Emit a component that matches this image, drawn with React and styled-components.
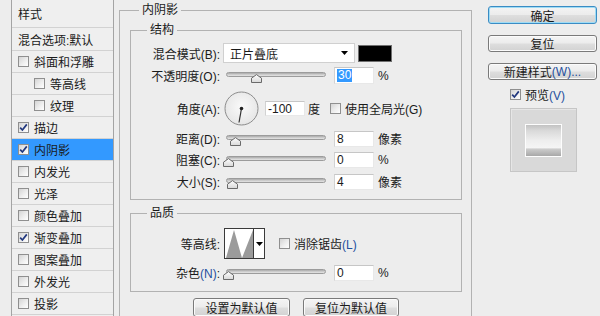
import React from 'react';
import styled, { createGlobalStyle } from 'styled-components';

const FONT = `"Liberation Sans", "Noto Sans CJK SC", sans-serif`;

const Global = createGlobalStyle`
  html, body { margin: 0; padding: 0; background: #ededed; }
  body { font-family: ${FONT}; font-size: 12px; color: #1a1a1a; }
  * { box-sizing: border-box; }
`;

const Dialog = styled.div`
  width: 600px;
  height: 316px;
  overflow: hidden;
  display: flex;
  align-items: flex-start;
  background: #ededed;
`;

/* ---------- left style list ---------- */
const StyleList = styled.div`
  margin-left: 11px;
  width: 103px;
  height: 330px;
  flex: none;
  border-left: 1px solid #a4a4a4;
  border-right: 1px solid #a4a4a4;
  background: #efefef;
`;

const ListRow = styled.div`
  height: ${(p) => p.$h || 22}px;
  display: flex;
  align-items: center;
  gap: 5px;
  padding-left: ${(p) => (p.$nested ? 22 : 6)}px;
  border-bottom: 1px solid #d2d2d2;
  background: ${(p) => (p.$selected ? '#3399ff' : 'transparent')};
  white-space: nowrap;
  font-size: 12px;
`;

/* ---------- checkbox ---------- */
const Box = styled.span`
  width: 11px;
  height: 11px;
  flex: none;
  display: inline-flex;
  align-items: center;
  justify-content: center;
  border: 1px solid #8f8f8f;
  background: linear-gradient(135deg, #d4d4d4 0%, #eeeeee 55%, #ffffff 100%);
`;

const Check = ({ checked }) => (
  <Box>
    {checked && (
      <svg width="9" height="9" viewBox="0 0 9 9">
        <path d="M1.2 4.6 L3.4 7 L7.8 1.4" fill="none" stroke="#22387e" strokeWidth="1.7" />
      </svg>
    )}
  </Box>
);

/* ---------- main panel ---------- */
const Main = styled.div`
  margin-left: 5px;
  width: 353px;
  flex: none;
`;

const Group = styled.fieldset`
  margin: ${(p) => p.$mt || 0}px 0 0 0;
  padding: 0;
  min-width: 0;
  border: 1px solid #b2b2b2;
`;

const Legend = styled.legend`
  margin-left: ${(p) => p.$ml}px;
  padding: 0 3px;
  height: 14px;
  line-height: 14px;
  font-size: 12px;
`;

const OuterBody = styled.div`
  padding: 6px 9px 12px 10px;
`;

const GroupBody = styled.div`
  display: flex;
  flex-direction: column;
  padding: ${(p) => p.$pt}px 0 ${(p) => p.$pb}px 0;
`;

const Row = styled.div`
  display: grid;
  grid-template-columns: 89px 1fr;
  column-gap: 3px;
  align-items: center;
  height: ${(p) => p.$h}px;
  margin-top: ${(p) => p.$mt || 0}px;
`;

const FieldLabel = styled.div`
  text-align: right;
  white-space: nowrap;
`;

const Key = styled.span`
  color: #1f4f9e;
`;

const Controls = styled.div`
  display: flex;
  align-items: center;
  height: 100%;
  white-space: nowrap;
`;

const Select = styled.div`
  width: 132px;
  height: 20px;
  display: flex;
  align-items: center;
  justify-content: space-between;
  padding: 0 6px 0 6px;
  background: #fff;
  border: 1px solid #d0d0d0;
`;

const Swatch = styled.div`
  width: 34px;
  height: 17px;
  margin-left: 3px;
  background: #000;
  border: 1px solid #707070;
`;

const Field = styled.div`
  width: 40px;
  height: ${(p) => p.$h || 17}px;
  margin-left: ${(p) => p.$ml || 8}px;
  display: flex;
  align-items: center;
  padding-left: 2px;
  background: #fff;
  border: 1px solid;
  border-color: #c6c6c6 #e8e8e8 #e8e8e8 #d2d2d2;
`;

const Selected = styled.span`
  background: #3399ff;
  color: #fff;
  padding: 0 1px;
  line-height: 13px;
`;

const Unit = styled.span`
  margin-left: ${(p) => p.$ml || 4}px;
`;

const SliderBox = styled.div`
  position: relative;
  width: 100px;
  height: 16px;
  margin-left: 3px;
  padding-top: 4px;
  flex: none;
`;

const Track = styled.div`
  height: 5px;
  border-radius: 3px;
  border: 1px solid #9c9c9c;
  background: linear-gradient(#a9a9a9, #d2d2d2 60%, #e4e4e4);
`;

const ThumbSvg = styled.svg`
  position: absolute;
  top: 6px;
`;

const Slider = ({ pos }) => (
  <SliderBox>
    <Track />
    <ThumbSvg width="11" height="9" viewBox="0 0 11 9" style={{ left: `${pos - 5.5}px` }}>
      <defs>
        <linearGradient id="tg" x1="0" y1="0" x2="0" y2="1">
          <stop offset="0" stopColor="#ffffff" />
          <stop offset="1" stopColor="#d8d8d8" />
        </linearGradient>
      </defs>
      <polygon points="0.5,8.5 0.5,4.2 5.5,0.6 10.5,4.2 10.5,8.5" fill="url(#tg)" stroke="#6a6a6a" strokeWidth="1" />
    </ThumbSvg>
  </SliderBox>
);

const Dial = () => (
  <svg width="35" height="35" viewBox="0 0 35 35" style={{ marginLeft: 1, flex: 'none' }}>
    <defs>
      <radialGradient id="dg" cx="0.5" cy="0.45" r="0.6">
        <stop offset="0" stopColor="#fafafa" />
        <stop offset="1" stopColor="#e4e4e4" />
      </radialGradient>
    </defs>
    <circle cx="17.5" cy="17.5" r="16.5" fill="url(#dg)" stroke="#8c8c8c" strokeWidth="1" />
    <line x1="17.5" y1="17.5" x2="15" y2="31.5" stroke="#333" strokeWidth="1.2" />
    <circle cx="17.5" cy="17.5" r="1.8" fill="#222" />
  </svg>
);

const Contour = styled.div`
  width: 41px;
  height: 31px;
  margin-left: 1px;
  display: flex;
  border: 1px solid #3a3a3a;
  background: #fff;
`;

const ContourPic = styled.div`
  width: 29px;
  border-right: 1px solid #3a3a3a;
  display: flex;
  align-items: flex-end;
`;

const ContourArrow = styled.div`
  flex: 1;
  display: flex;
  align-items: center;
  justify-content: center;
`;

const CheckLabel = styled.div`
  display: flex;
  align-items: center;
  gap: 4px;
  margin-left: ${(p) => p.$ml || 0}px;
`;

const Caret = () => (
  <svg width="7" height="4" viewBox="0 0 7 4">
    <polygon points="0,0 7,0 3.5,4" fill="#000" />
  </svg>
);

const ButtonRow = styled.div`
  display: flex;
  justify-content: center;
  gap: 13px;
  margin-top: 6px;
`;

const Btn = styled.div`
  width: ${(p) => p.$w}px;
  height: ${(p) => p.$h || 18}px;
  flex: none;
  display: flex;
  align-items: center;
  justify-content: center;
  border: 1px solid ${(p) => (p.$primary ? '#3a8cc4' : '#7a7a7a')};
  border-radius: 3px;
  background: linear-gradient(#f4f4f4 0%, #ececec 48%, #dedede 52%, #d2d2d2 100%);
  box-shadow: inset 0 0 0 1px ${(p) => (p.$primary ? '#9fdcf5' : '#fbfbfb')};
  white-space: nowrap;
  font-size: 12px;
  margin-top: ${(p) => p.$mt || 0}px;
`;

/* ---------- right column ---------- */
const Side = styled.div`
  margin-left: 1px;
  flex: 1;
  display: flex;
  flex-direction: column;
  align-items: flex-start;
  padding: 6px 0 0 15px;
`;

const Preview = styled.div`
  width: 67px;
  height: 64px;
  margin: 7px 0 0 22px;
  display: flex;
  align-items: center;
  justify-content: center;
  background: #d9d9d9;
  border: 1px solid #c6c6c6;
  box-shadow: inset 1px 1px 0 #e6e6e6;
`;

const PreviewSquare = styled.div`
  width: 37px;
  height: 33px;
  border: 1px solid #fdfdfd;
  background: linear-gradient(
    to bottom,
    #c2c2c2 0%,
    #d9d9d9 18%,
    #eeeeee 50%,
    #f5f5f5 74%,
    #cdcdcd 77%,
    #a8a8a8 100%
  );
`;

const layers = [
  { label: '斜面和浮雕' },
  { label: '等高线', nested: true },
  { label: '纹理', nested: true },
  { label: '描边', checked: true },
  { label: '内阴影', checked: true, selected: true },
  { label: '内发光' },
  { label: '光泽' },
  { label: '颜色叠加' },
  { label: '渐变叠加', checked: true },
  { label: '图案叠加' },
  { label: '外发光' },
  { label: '投影' },
];

const sliderRows = [
  { label: '距离(D):', pos: 9, value: '8', unit: '像素', mt: 5 },
  { label: '阻塞(C):', pos: 2, value: '0', unit: '%', mt: 5 },
  { label: '大小(S):', pos: 6, value: '4', unit: '像素', mt: 6 },
];

export default function App() {
  return (
    <>
      <Global />
      <Dialog>
        <StyleList>
          <ListRow $h={28}>样式</ListRow>
          <ListRow $h={23}>混合选项:默认</ListRow>
          {layers.map((l) => (
            <ListRow key={l.label} $nested={l.nested} $selected={l.selected}>
              <Check checked={l.checked} />
              {l.label}
            </ListRow>
          ))}
        </StyleList>

        <Main>
          <Group $mt={3}>
            <Legend $ml={19}>内阴影</Legend>
            <OuterBody>
              <Group>
                <Legend $ml={16}>结构</Legend>
                <GroupBody $pt={6} $pb={10}>
                  <Row $h={20}>
                    <FieldLabel>混合模式(B):</FieldLabel>
                    <Controls>
                      <Select>
                        正片叠底
                        <Caret />
                      </Select>
                      <Swatch />
                    </Controls>
                  </Row>
                  <Row $h={17} $mt={4}>
                    <FieldLabel>不透明度(O):</FieldLabel>
                    <Controls>
                      <Slider pos={30} />
                      <Field>
                        <Selected>30</Selected>
                      </Field>
                      <Unit>%</Unit>
                    </Controls>
                  </Row>
                  <Row $h={34} $mt={7}>
                    <FieldLabel>角度(A):</FieldLabel>
                    <Controls>
                      <Dial />
                      <Field $ml={6} $h={15}>-100</Field>
                      <Unit $ml={3}>度</Unit>
                      <CheckLabel $ml={10}>
                        <Check />
                        使用全局光(G)
                      </CheckLabel>
                    </Controls>
                  </Row>
                  {sliderRows.map((r) => (
                    <Row key={r.label} $h={16} $mt={r.mt}>
                      <FieldLabel>{r.label}</FieldLabel>
                      <Controls>
                        <Slider pos={r.pos} />
                        <Field $h={16}>{r.value}</Field>
                        <Unit>{r.unit}</Unit>
                      </Controls>
                    </Row>
                  ))}
                </GroupBody>
              </Group>

              <Group $mt={6}>
                <Legend $ml={16}>品质</Legend>
                <GroupBody $pt={8} $pb={11}>
                  <Row $h={31}>
                    <FieldLabel>等高线:</FieldLabel>
                    <Controls>
                      <Contour>
                        <ContourPic>
                          <svg width="28" height="29" viewBox="0 0 28 29">
                            <polygon points="1,29 9,1 17,29 28,1 28,29" fill="#9b9b9b" />
                          </svg>
                        </ContourPic>
                        <ContourArrow>
                          <Caret />
                        </ContourArrow>
                      </Contour>
                      <CheckLabel $ml={14}>
                        <Check />
                        <span>
                          消除锯齿<Key>(L)</Key>
                        </span>
                      </CheckLabel>
                    </Controls>
                  </Row>
                  <Row $h={16} $mt={5}>
                    <FieldLabel>
                      杂色<Key>(N)</Key>:
                    </FieldLabel>
                    <Controls>
                      <Slider pos={2} />
                      <Field $h={16}>0</Field>
                      <Unit>%</Unit>
                    </Controls>
                  </Row>
                </GroupBody>
              </Group>

              <ButtonRow>
                <Btn $w={97} $h={19}>设置为默认值</Btn>
                <Btn $w={96} $h={19}>复位为默认值</Btn>
              </ButtonRow>
            </OuterBody>
          </Group>
        </Main>

        <Side>
          <Btn $w={109} $h={18} $primary>确定</Btn>
          <Btn $w={109} $h={17} $mt={11}>复位</Btn>
          <Btn $w={109} $h={17} $mt={11}>
            新建样式<Key>(W)...</Key>
          </Btn>
          <CheckLabel $ml={22} style={{ marginTop: 8, height: 13 }}>
            <Check checked />
            <span>
              预览<Key>(V)</Key>
            </span>
          </CheckLabel>
          <Preview>
            <PreviewSquare />
          </Preview>
        </Side>
      </Dialog>
    </>
  );
}
